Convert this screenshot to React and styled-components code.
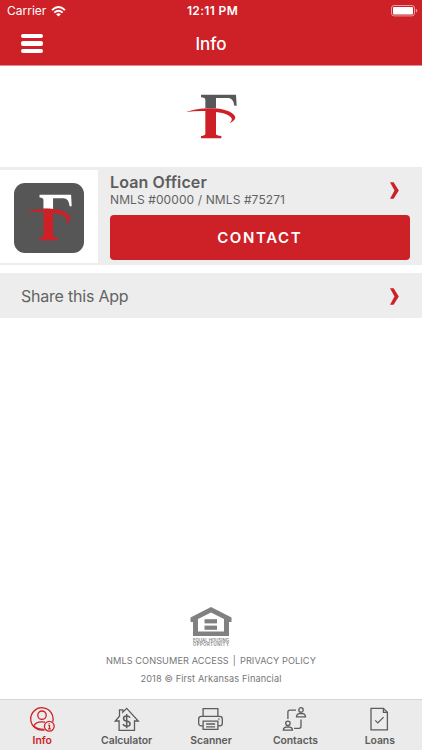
import * as React from "react"
import styled, { createGlobalStyle } from "styled-components"

const red = "#cd2027"
const grey = "#565656"

const tabs = [
  { label: "Info", icon: InfoIcon, active: true },
  { label: "Calculator", icon: CalculatorIcon },
  { label: "Scanner", icon: ScannerIcon },
  { label: "Contacts", icon: ContactsIcon },
  { label: "Loans", icon: LoansIcon },
]

const App = () => {
  return (
    <Screen>
      <GlobalStyle />
      <StatusBar>
        <Carrier>
          <StatusText>Carrier</StatusText>
          <WifiIcon />
        </Carrier>
        <StatusText $bold>12:11 PM</StatusText>
        <BatteryWrap>
          <BatteryIcon />
        </BatteryWrap>
      </StatusBar>
      <Header>
        <MenuButton aria-label="Menu">
          <MenuBar />
          <MenuBar />
          <MenuBar />
        </MenuButton>
        <Title>Info</Title>
      </Header>

      <LogoArea>
        <Logo width={51} height={45} top="#58585a" />
      </LogoArea>

      <Officer>
        <Photo>
          <Tile>
            <Logo width={46} height={47} top="#fff" />
          </Tile>
        </Photo>
        <Details>
          <OfficerHead>
            <div>
              <Name>Loan Officer</Name>
              <License>NMLS #00000 / NMLS #75271</License>
            </div>
            <Chevron />
          </OfficerHead>
          <ContactButton>CONTACT</ContactButton>
        </Details>
      </Officer>

      <ShareRow>
        <span>Share this App</span>
        <Chevron />
      </ShareRow>

      <Footer>
        <HousingLogo />
        <Links>
          <span>NMLS CONSUMER ACCESS</span>
          <span>|</span>
          <span>PRIVACY POLICY</span>
        </Links>
        <Copyright>2018 © First Arkansas Financial</Copyright>
      </Footer>

      <TabBar>
        {tabs.map(({ label, icon: Icon, active }) => (
          <Tab key={label} $active={active}>
            <Icon />
            <TabLabel>{label}</TabLabel>
          </Tab>
        ))}
      </TabBar>
    </Screen>
  )
}

export default App

// icons
function Logo({ width, height, top }) {
  return (
    <svg width={width} height={height} viewBox="30 27 153 135" preserveAspectRatio="none">
      <path
        fill={top}
        d="M75 29H180L182 62H175C173 47 167 39 154 39H120V70Q104 68 88 69V44Q88 38 75 37Z"
      />
      <path
        fill={red}
        d="M88 75H120V146Q120 152 136 153V160H75V153Q88 152 88 146Z"
      />
      <path
        fill={red}
        d="M30 81C68 67 137 64 166 83C184 94 181 106 160 115C170 105 170 99 159 92C136 79 80 75 30 81Z"
      />
    </svg>
  )
}

function WifiIcon() {
  return (
    <svg width="15" height="11" viewBox="0 0 15 11" fill="none" stroke="#fff" strokeWidth="1.9">
      <path d="M1 4.1Q7.5 -1.9 14 4.1" />
      <path d="M3.3 6.6Q7.5 2.8 11.7 6.6" />
      <path d="M7.5 10.6L5.1 8.2Q7.5 6.2 9.9 8.2Z" fill="#fff" stroke="none" />
    </svg>
  )
}

function BatteryIcon() {
  return (
    <svg width="27" height="12" viewBox="0 0 27 12">
      <rect x="0.5" y="0.5" width="23" height="10.4" rx="2.6" fill="none" stroke="#fff" strokeOpacity=".55" />
      <rect x="2" y="2" width="20" height="7.4" rx="1" fill="#fff" />
      <path d="M24.8 3.8Q26.4 4.3 26.4 5.7T24.8 7.6Z" fill="#fff" fillOpacity=".55" />
    </svg>
  )
}

function Chevron() {
  return (
    <svg width="9" height="17" viewBox="0 0 9 17" fill={red}>
      <path d="M0 0.3H3.6L8.8 8.5L3.6 16.7H0L4.5 8.5Z" />
    </svg>
  )
}

function HousingLogo() {
  return (
    <svg width="42" height="40" viewBox="0 0 42 40" fill="#818181">
      <path
        fillRule="evenodd"
        d="M21 0L41.5 10.5V15H39V29H3V15H.5V10.5ZM21 5.4L8 12V24.5H34V12Z"
      />
      <rect x="14.5" y="12.2" width="12.5" height="4.2" />
      <rect x="14.5" y="18.6" width="12.5" height="4.2" />
      <Fine x="3" y="34.8" textLength="36">EQUAL HOUSING</Fine>
      <Fine x="3" y="39.4" textLength="36">OPPORTUNITY</Fine>
    </svg>
  )
}

function InfoIcon() {
  return (
    <TabIcon viewBox="-1 0 26 26">
      <path d="M14.6 22.8A11.2 11.2 0 1 1 22.7 14.9" />
      <circle cx="12" cy="8.2" r="4.2" />
      <path d="M3.7 19C5.4 15.3 9.5 14.2 15 15.2M3.7 19Q8 22.5 14.2 22.4" />
      <circle cx="19.3" cy="19.3" r="4.9" />
      <path d="M18.3 18.4H19.5V21.8M18.1 21.8H20.8M19.2 16.2V17.1" />
    </TabIcon>
  )
}

function CalculatorIcon() {
  return (
    <TabIcon viewBox="0.3 0 26 26">
      <path d="M5.4 23.4V14H1.6L5.8 9.2V2.8H9.1V5.2L13 1.4L24.6 14H20.8V23.4Z" />
      <path d="M16.3 10.8Q15.5 8.9 13 8.9Q9.8 8.9 9.8 11.4Q9.8 13.5 13 14.1Q16.4 14.7 16.4 17Q16.4 19.3 13 19.3Q10.2 19.3 9.4 17.1M13 6.9V21.3" strokeWidth="1.5" />
    </TabIcon>
  )
}

function ScannerIcon() {
  return (
    <TabIcon viewBox="0.5 0 26 26">
      <path d="M5.6 9V1.6H20.4V9M5.6 18.8H3.8Q1.2 18.8 1.2 16.2V11.9Q1.2 9.3 3.8 9.3H22.2Q24.8 9.3 24.8 11.9V16.2Q24.8 18.8 22.2 18.8H20.4" />
      <path d="M5.6 14.2H20.4V22.4H5.6ZM8.6 17H17.6M8.6 19.8H17.6M20.8 12H22" />
    </TabIcon>
  )
}

function ContactsIcon() {
  return (
    <TabIcon viewBox="0.3 0 26 26">
      <circle cx="19.3" cy="2.9" r="2.2" />
      <path d="M14.8 9.8Q14.8 6.4 19.3 6.3Q23.8 6.4 23.8 9.8Z" />
      <circle cx="6.2" cy="16.3" r="2.2" />
      <path d="M1.6 23.2Q1.6 19.9 6.2 19.8Q10.8 19.9 10.8 23.2Z" />
      <path d="M14.3 3.1H8.2Q6.2 3.1 6.2 5.1V12.1M19.3 12.5V19.3Q19.3 21.3 17.3 21.3H12.4" />
    </TabIcon>
  )
}

function LoansIcon() {
  return (
    <TabIcon viewBox="0.8 0 26 26">
      <path d="M4.8 1.3H17.2L21.2 5.3V22.9H4.8ZM17.2 1.3V5.3H21.2" />
      <path d="M9 13.4L11.6 15.9L17.4 10.1" />
    </TabIcon>
  )
}

const GlobalStyle = createGlobalStyle`
  * {
    box-sizing: border-box;
  }

  body {
    margin: 0;
    background: #fff;
    font-family: Inter, "Liberation Sans", sans-serif;
  }

  svg {
    display: block;
    flex: none;
  }
`

const Screen = styled.div`
  display: flex;
  flex-direction: column;
  width: 422px;
  height: 750px;
  overflow: hidden;
  background: #fff;
  color: #636363;
`

const StatusBar = styled.div`
  display: grid;
  grid-template-columns: 1fr auto 1fr;
  align-items: center;
  height: 22px;
  padding: 0 4px 0 7px;
  background: ${red};
  color: #fff;
`

const StatusText = styled.span`
  font-size: 12px;
  font-weight: ${(props) => (props.$bold ? 600 : 400)};
  letter-spacing: ${(props) => (props.$bold ? "0.35px" : "0")};
  line-height: 22px;
  white-space: nowrap;
`

const Carrier = styled.div`
  display: flex;
  align-items: center;
  gap: 5px;
`

const BatteryWrap = styled.div`
  justify-self: end;
`

const Header = styled.header`
  display: grid;
  grid-template-columns: 1fr auto 1fr;
  align-items: center;
  height: 44px;
  padding: 0 21px;
  background: ${red};
  border-bottom: 1px solid #e58d91;
`

const MenuButton = styled.button`
  display: flex;
  flex-direction: column;
  gap: 3px;
  width: 22px;
  padding: 0;
  border: 0;
  background: transparent;
`

const MenuBar = styled.span`
  height: 4.5px;
  border-radius: 2px;
  background: #fff;
`

const Title = styled.h1`
  margin: 0;
  color: #fff;
  font-size: 17px;
  font-weight: 500;
  line-height: 42px;
`

const LogoArea = styled.div`
  display: flex;
  justify-content: center;
  height: 101px;
  padding: 28px 0 0 1px;
`

const Officer = styled.section`
  display: flex;
  height: 98px;
  padding: 3px 0 2px;
  background: #ededed;
`

const Photo = styled.div`
  display: flex;
  align-items: center;
  justify-content: center;
  width: 98px;
  padding-top: 2px;
  background: #fff;
`

const Tile = styled.div`
  display: flex;
  align-items: flex-start;
  width: 70px;
  height: 70px;
  padding: 11px 0 0 12px;
  border-radius: 11px;
  background: ${grey};
`

const Details = styled.div`
  display: flex;
  flex: 1;
  flex-direction: column;
  padding: 2px 12.5px 0 12px;
`

const OfficerHead = styled.div`
  display: flex;
  align-items: flex-start;
  justify-content: space-between;
  height: 43px;
  padding: 0 11px 0 0;

  svg {
    margin-top: 10px;
  }
`

const Name = styled.h2`
  margin: 0;
  color: #5d5d5d;
  font-size: 16px;
  font-weight: 600;
  line-height: 20px;
  letter-spacing: 0.12px;
`

const License = styled.div`
  font-size: 12px;
  line-height: 15px;
  letter-spacing: 0.1px;
  white-space: nowrap;
`

const ContactButton = styled.button`
  height: 45px;
  padding: 0;
  border: 0;
  border-radius: 4px;
  background: ${red};
  color: #fff;
  font-family: inherit;
  font-size: 15px;
  font-weight: 600;
  letter-spacing: 1.6px;
`

const ShareRow = styled.div`
  display: flex;
  align-items: center;
  justify-content: space-between;
  height: 45px;
  margin-top: 8px;
  padding: 0 23px 0 21px;
  background: #ededed;
  font-size: 16px;
  letter-spacing: -0.22px;

  svg {
    margin-top: 2px;
  }
`

const Footer = styled.footer`
  display: flex;
  flex-direction: column;
  align-items: center;
  margin-top: auto;
  padding-bottom: 13px;
  color: #777;
`

const Fine = styled.text`
  font-size: 4.3px;
  font-weight: 600;
`

const Links = styled.div`
  display: flex;
  gap: 4px;
  margin-top: 6px;
  font-size: 9.2px;
  line-height: 15px;
  letter-spacing: 0.07px;
`

const Copyright = styled.div`
  margin-top: 4px;
  font-size: 9.2px;
  line-height: 14px;
  letter-spacing: 0.12px;
`

const TabBar = styled.nav`
  display: grid;
  grid-template-columns: repeat(5, 1fr);
  height: 51px;
  border-top: 1px solid #d4d4d4;
  background: #ebebeb;
`

const Tab = styled.a`
  display: flex;
  flex-direction: column;
  align-items: center;
  padding-top: 7px;
  color: ${(props) => (props.$active ? red : "#5c5c5c")};
`

const TabIcon = styled.svg`
  width: 26px;
  height: 26px;
  fill: none;
  stroke: currentColor;
  stroke-width: 1.3;
`

const TabLabel = styled.span`
  margin-top: 1px;
  font-size: 10.4px;
  font-weight: 600;
  line-height: 14px;
  letter-spacing: -0.05px;
`
